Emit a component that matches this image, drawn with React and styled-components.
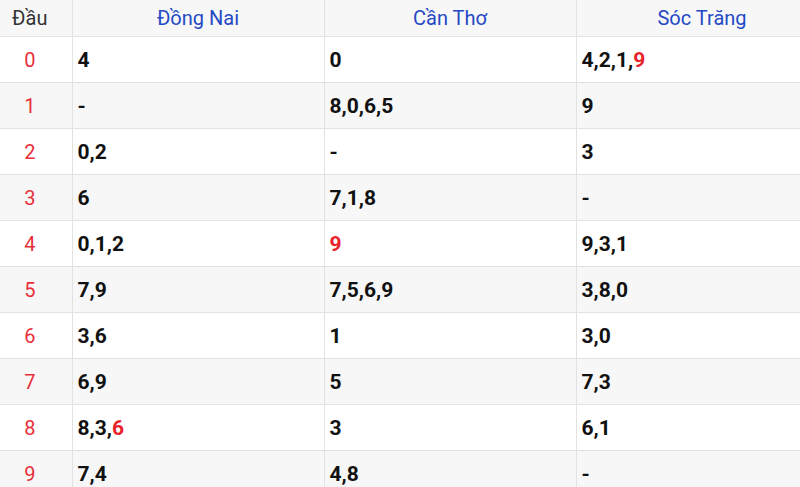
import { createGlobalStyle, styled } from "styled-components";

const GlobalStyle = createGlobalStyle`
  html, body {
    margin: 0;
    padding: 0;
    background: #fff;
    font-family: Roboto, "Noto Sans", Arial, sans-serif;
  }
  #root {
    width: 800px;
    height: 487px;
    overflow: hidden;
  }
`;

const Table = styled.table`
  width: 828px;
  border-collapse: collapse;
  table-layout: fixed;
`;

const Col = styled.col`
  width: ${(props) => props.w}px;
`;

const HeadCell = styled.th`
  height: 36px;
  padding: ${(props) => (props.first ? "0 12px 0 0" : "0 6px")};
  font-weight: 400;
  font-size: 20px;
  text-align: center;
  color: ${(props) => (props.first ? "#333" : "#2549c4")};
  border: 1px solid #e2e2e2;
  border-top: 0;
  border-left: ${(props) => (props.first ? "0" : "1px solid #e2e2e2")};
`;

const Row = styled.tr`
  background: ${(props) => (props.odd ? "#f7f7f7" : "#fff")};
`;

const HeadRow = styled.tr`
  background: #f7f7f7;
`;

const HeadNum = styled.td`
  height: 45px;
  padding: 0 12px 0 0;
  text-align: center;
  font-size: 20px;
  color: #e8303a;
  border: 1px solid #e2e2e2;
  border-left: 0;
`;

const Cell = styled.td`
  height: 45px;
  padding: 0 5px;
  font-size: 21px;
  font-weight: 700;
  color: #111;
  border: 1px solid #e2e2e2;
`;

const Hot = styled.span`
  color: #e8222b;
`;

const columns = ["Đồng Nai", "Cần Thơ", "Sóc Trăng"];

const rows = [
  ["4", "0", "4,2,1,*9"],
  ["-", "8,0,6,5", "9"],
  ["0,2", "-", "3"],
  ["6", "7,1,8", "-"],
  ["0,1,2", "*9", "9,3,1"],
  ["7,9", "7,5,6,9", "3,8,0"],
  ["3,6", "1", "3,0"],
  ["6,9", "5", "7,3"],
  ["8,3,*6", "3", "6,1"],
  ["7,4", "4,8", "-"],
];

function Numbers({ value }) {
  const parts = value.split(",");
  return parts.map((p, i) => (
    <span key={i}>
      {p.startsWith("*") ? <Hot>{p.slice(1)}</Hot> : p}
      {i < parts.length - 1 ? "," : ""}
    </span>
  ));
}

export default function App() {
  return (
    <>
      <GlobalStyle />
      <Table>
        <colgroup>
          <Col w={72} />
          <Col w={252} />
          <Col w={252} />
          <Col w={252} />
        </colgroup>
        <thead>
          <HeadRow>
            <HeadCell first>Đầu</HeadCell>
            {columns.map((c) => (
              <HeadCell key={c}>{c}</HeadCell>
            ))}
          </HeadRow>
        </thead>
        <tbody>
          {rows.map((r, i) => (
            <Row key={i} odd={i % 2 === 1}>
              <HeadNum>{i}</HeadNum>
              {r.map((v, j) => (
                <Cell key={j}>
                  <Numbers value={v} />
                </Cell>
              ))}
            </Row>
          ))}
        </tbody>
      </Table>
    </>
  );
}
